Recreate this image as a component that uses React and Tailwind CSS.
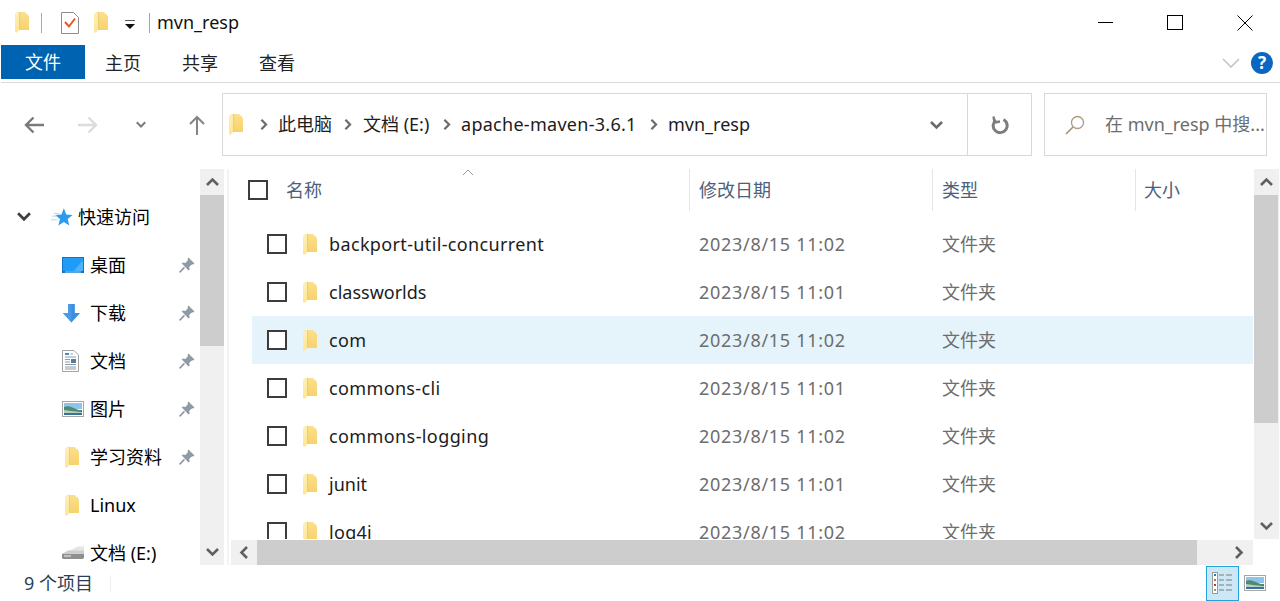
import React from "react";

const Folder = ({ className = "" }) => (
  <svg viewBox="0 0 14 21" className={`w-[14px] h-[21px] shrink-0 ${className}`}>
    <defs>
      <linearGradient id="fbody" x1="0" y1="0" x2="0" y2="1">
        <stop offset="0" stopColor="#fbe08f" />
        <stop offset="1" stopColor="#f8d26c" />
      </linearGradient>
      <linearGradient id="fleaf" x1="0" y1="0" x2="0" y2="1">
        <stop offset="0" stopColor="#ffefb5" />
        <stop offset="1" stopColor="#fde59a" />
      </linearGradient>
    </defs>
    <path d="M1 0H10L11.5 2H13V4H14V18H3V1Z" fill="url(#fbody)" />
    <path d="M0 1.5L4.5 0V18L1.2 21L0 20Z" fill="url(#fleaf)" />
    <path d="M4.6 0V18" stroke="#e8c468" strokeWidth="0.8" />
  </svg>
);

const Chevron = ({ dir = "down", className = "", color = "#606060" }) => {
  const d = {
    up: "M1 9L6.5 3.5L12 9",
    down: "M1 3L6.5 8.5L12 3",
    left: "M9 1L3.5 6.5L9 12",
    right: "M4 1L9.5 6.5L4 12",
  }[dir];
  return (
    <svg viewBox="0 0 13 13" className={`w-[13px] h-[13px] shrink-0 ${className}`} fill="none" stroke={color} strokeWidth="2.6">
      <path d={d} />
    </svg>
  );
};

const Check = ({ className = "" }) => (
  <div className={`w-5 h-5 border-2 border-[#3c3c3c] bg-white shrink-0 ${className}`} />
);

const Pin = () => (
  <svg viewBox="0 0 16 16" className="w-4 h-4 shrink-0">
    <path d="M9.5 0.5L15.5 6.5L14.3 7.6L13.2 7.2L10.3 9.7L10.6 12.4L9.5 13.4L2.8 6.6L3.8 5.6L6.5 5.9L9 3L8.5 1.7Z" fill="#8f9aa5" />
    <path d="M5.4 10.4L0.6 15.4" stroke="#8f9aa5" strokeWidth="1.6" />
  </svg>
);

const Star = () => (
  <svg viewBox="0 0 24 20" className="w-[22px] h-[19px] shrink-0">
    <path d="M14 0L16.6 6.8L23.6 7.2L18.2 11.6L20 18.6L14 14.8L8 18.6L9.8 11.6L4.4 7.2L11.4 6.8Z" fill="#2b9bee" />
    <path d="M1 8.5H7M0 12.5H7M3 5.5H9" stroke="#a5d7f8" strokeWidth="1" />
  </svg>
);

const Desktop = () => (
  <svg viewBox="0 0 22 16" className="w-[22px] h-4 shrink-0">
    <rect x="0" y="0" width="22" height="16" fill="#0f75c8" />
    <rect x="1" y="1" width="20" height="13" fill="#1e9cf8" />
    <path d="M12 14L21 3V14Z" fill="#4db4fb" />
    <path d="M3 15H19" stroke="#cfe9fb" strokeWidth="0.8" />
  </svg>
);

const Download = () => (
  <svg viewBox="0 0 20 20" className="w-[19px] h-[19px] shrink-0">
    <path d="M6.5 0H13.5V9.5H19L10 19.5L1 9.5H6.5Z" fill="#3b8fe0" />
    <path d="M1 9.5H6.5V0H10V19.5Z" fill="#4a9be6" />
  </svg>
);

const DocIcon = () => (
  <svg viewBox="0 0 17 22" className="w-[17px] h-[22px] shrink-0">
    <path d="M0.5 0.5H12L16.5 5V21.5H0.5Z" fill="#fff" stroke="#a3a3a3" />
    <path d="M3 4H7" stroke="#3a8ed8" strokeWidth="2" />
    <path d="M8.5 4H11M3 7H14M3 9.5H8M3 12H8M3 14.5H14M3 17H14M3 19H14" stroke="#8b9aa8" strokeWidth="1" />
    <rect x="9" y="9" width="5" height="4" fill="#4d7f9e" />
  </svg>
);

const Picture = ({ className = "w-[22px] h-4" }) => (
  <svg viewBox="0 0 22 16" className={`${className} shrink-0`}>
    <rect x="0.5" y="0.5" width="21" height="15" fill="#fff" stroke="#a5a5a5" />
    <rect x="2" y="2" width="18" height="6" fill="#8fc4ea" />
    <path d="M2 6C6 4 10 6 14 8C16 9 18 9 20 9V14H2Z" fill="#4f8a6f" />
    <rect x="2" y="10" width="18" height="4" fill="#38709a" />
    <path d="M2 9L9 10L20 11V12H2Z" fill="#b8cfc4" />
  </svg>
);

const Drive = () => (
  <svg viewBox="0 0 23 14" className="w-[23px] h-[14px] shrink-0">
    <path d="M0 8L16 0.5H22V7H0Z" fill="#e5e5e5" />
    <path d="M0 8L6 4.5H22V9L21 11H1Z" fill="#cfcfcf" />
    <path d="M0 8H22V11.5L21 13H1L0 12Z" fill="#8f8f8f" />
    <path d="M2 10H9" stroke="#f1f1f1" strokeWidth="1" />
  </svg>
);

const Tab = ({ children, className }) => (
  <span className={`text-[#222] leading-[34px] mt-px ${className}`}>{children}</span>
);

const NavItem = ({ icon, label, pin }) => (
  <div className="h-12 flex items-center shrink-0">
    <div className="w-[28px] ml-[62px] flex items-center">{icon}</div>
    <span className="text-black text-[18px] whitespace-nowrap">{label}</span>
    {pin && <span className="ml-auto mr-[5px]"><Pin /></span>}
  </div>
);

const Row = ({ name, date, active, track }) => (
  <div className={`h-12 flex items-center shrink-0 ml-[21px] ${active ? "bg-[#e5f3fb]" : ""}`}>
    <Check className="ml-[15px]" />
    <Folder className="ml-[16px]" />
    <span className={`ml-[12px] w-[370px] text-[18px] text-[#1c1c1c] whitespace-nowrap ${track}`}>{name}</span>
    <span className="w-[243px] text-[18px] text-[#6d6d6d] whitespace-nowrap tracking-[0.7px]">{date}</span>
    <span className="text-[18px] text-[#6d6d6d]">文件夹</span>
  </div>
);

const rows = [
  ["backport-util-concurrent", "2023/8/15 11:02", false, "tracking-[0.36px]"],
  ["classworlds", "2023/8/15 11:01", false, ""],
  ["com", "2023/8/15 11:02", true, "tracking-[0.3px]"],
  ["commons-cli", "2023/8/15 11:01", false, "tracking-[0.36px]"],
  ["commons-logging", "2023/8/15 11:02", false, "tracking-[0.4px]"],
  ["junit", "2023/8/15 11:01", false, ""],
  ["log4j", "2023/8/15 11:02", false, "tracking-[0.3px]"],
];

const Crumb = ({ children, className = "" }) => (
  <div className="flex items-center gap-[9px] shrink-0">
    <Chevron dir="right" color="#6a6a6a" className="!w-[11px] !h-[11px]" />
    <span className={`text-[18px] text-[#1c1c1c] whitespace-nowrap ${className}`}>{children}</span>
  </div>
);

export default function App() {
  return (
    <div className="w-[1280px] h-[601px] bg-white overflow-hidden flex flex-col font-['Noto_Sans','Noto_Sans_CJK_SC',sans-serif]">
      {/* title bar */}
      <div className="h-[45px] flex items-center shrink-0">
        <Folder className="ml-[15px]" />
        <div className="w-px h-5 bg-[#a8a8a8] ml-[12px]" />
        <svg viewBox="0 0 18 22" className="w-[18px] h-[22px] ml-[19px]">
          <path d="M0.5 0.5H12.5L17.5 5.5V21.5H0.5Z" fill="#fff" stroke="#8c8c8c" />
          <path d="M4 10L8 14.5L14 6.5" fill="none" stroke="#e8572a" strokeWidth="2" />
        </svg>
        <Folder className="ml-[15px]" />
        <svg viewBox="0 0 12 10" className="w-3 h-[10px] ml-[16px] mt-[4px]">
          <path d="M1 0H11" stroke="#111" strokeWidth="1.4" />
          <path d="M1 4H11L6 9Z" fill="#111" />
        </svg>
        <div className="w-px h-5 bg-[#a8a8a8] ml-[13px]" />
        <span className="ml-[7px] text-[18px] text-[#111]">mvn_resp</span>
        <div className="ml-auto flex items-center mr-[27px]">
          <div className="w-[15px] h-px bg-black" />
          <div className="w-[16px] h-[15px] border border-black ml-[54px]" />
          <svg viewBox="0 0 16 16" className="w-4 h-4 ml-[54px]" fill="none" stroke="#000" strokeWidth="1">
            <path d="M0.5 0.5L15.5 15.5M15.5 0.5L0.5 15.5" />
          </svg>
        </div>
      </div>

      {/* ribbon tabs */}
      <div className="h-[38px] shrink-0 flex items-start border-b border-[#dadada] ml-px text-[18px]">
        <span className="w-[84px] h-[34px] bg-[#0063b1] text-white text-center leading-[34px]">文件</span>
        <Tab className="ml-[20px]">主页</Tab>
        <Tab className="ml-[41px]">共享</Tab>
        <Tab className="ml-[41px]">查看</Tab>
        <div className="ml-auto flex items-center h-[34px] mt-px">
          <svg viewBox="0 0 18 10" className="w-[18px] h-[10px] mr-[11px]" fill="none" stroke="#c4c4c4" strokeWidth="1.6">
            <path d="M1 1L9 9L17 1" />
          </svg>
          <div className="w-[22px] h-[22px] mr-[7px] rounded-full bg-[#0a66c0] text-white text-[17px] font-bold flex items-center justify-center">?</div>
        </div>
      </div>

      {/* address row */}
      <div className="h-[63px] mt-[10px] shrink-0 flex items-center">
        <svg viewBox="0 0 20 18" className="w-5 h-[18px] ml-[24px]" fill="none" stroke="#7a7a7a" strokeWidth="2.4">
          <path d="M20 9H2M9.5 1.5L2 9L9.5 16.5" />
        </svg>
        <svg viewBox="0 0 20 18" className="w-5 h-[18px] ml-[34px]" fill="none" stroke="#dcdcdc" strokeWidth="2.4">
          <path d="M0 9H18M10.5 1.5L18 9L10.5 16.5" />
        </svg>
        <Chevron color="#7a7a7a" className="!w-[10px] !h-[10px] ml-[38px]" />
        <svg viewBox="0 0 16 20" className="w-4 h-5 ml-[43px]" fill="none" stroke="#858585" strokeWidth="2">
          <path d="M8 20V2M1 9L8 2L15 9" />
        </svg>
        <div className="ml-[17px] w-[810px] h-[63px] border border-[#d9d9d9] flex items-center">
          <Folder className="ml-[6px]" />
          <div className="ml-[15px]"><Crumb className="w-[64px]">此电脑</Crumb></div>
          <Crumb className="w-[78px] ml-px">文档 (E:)</Crumb>
          <Crumb className="w-[187px] tracking-[0.28px]">apache-maven-3.6.1</Crumb>
          <Crumb>mvn_resp</Crumb>
          <div className="ml-auto flex items-center h-full">
            <Chevron color="#6a6a6a" className="mr-[24px] mt-[2px]" />
            <div className="w-px h-full bg-[#d9d9d9]" />
            <div className="w-[63px] flex justify-center">
              <svg viewBox="0 0 18 20" className="w-[18px] h-5" fill="none" stroke="#7d7d7d" strokeWidth="3">
                <path d="M5 5A7 7 0 1 0 12.5 4.5" />
                <path d="M2.5 1.5L3.5 7.5L9 6.5" strokeWidth="2.4" />
              </svg>
            </div>
          </div>
        </div>
        <div className="ml-[12px] w-[223px] h-[63px] border border-[#d9d9d9] flex items-center">
          <svg viewBox="0 0 20 20" className="w-5 h-5 ml-[20px]" fill="none" stroke="#8f8f8f" strokeWidth="1.3">
            <circle cx="12.5" cy="7.5" r="6" stroke="#b09a80" />
            <path d="M8 12L1 19" stroke="#a08f7f" strokeWidth="1.6" />
          </svg>
          <span className="ml-[20px] text-[18px] text-[#6d6d6d] whitespace-nowrap">在 mvn_resp 中搜...</span>
        </div>
      </div>

      {/* main */}
      <div className="h-[396px] mt-[13px] shrink-0 flex">
        {/* sidebar */}
        <div className="w-[200px] shrink-0 overflow-hidden flex flex-col pt-[24px]">
          <div className="h-12 flex items-center shrink-0">
            <Chevron color="#404040" className="ml-[17px] !w-[14px] !h-[14px]" />
            <div className="ml-[20px]"><Star /></div>
            <span className="ml-[5px] text-[18px] text-black">快速访问</span>
          </div>
          <NavItem icon={<Desktop />} label="桌面" pin />
          <NavItem icon={<Download />} label="下载" pin />
          <NavItem icon={<DocIcon />} label="文档" pin />
          <NavItem icon={<Picture />} label="图片" pin />
          <NavItem icon={<Folder className="ml-[3px]" />} label="学习资料" pin />
          <NavItem icon={<Folder className="ml-[3px]" />} label="Linux" />
          <NavItem icon={<Drive />} label="文档 (E:)" />
        </div>
        <div className="w-[24px] shrink-0 h-full bg-[#f0f0f0] flex flex-col items-center">
          <div className="h-[26px] flex items-center"><Chevron dir="up" /></div>
          <div className="w-full h-[151px] bg-[#cdcdcd]" />
          <div className="mt-auto h-[26px] flex items-center"><Chevron dir="down" /></div>
        </div>
        <div className="w-[4px] shrink-0 ml-[3px] border-l-2 border-[#f3f3f3]" />

        {/* list */}
        <div className="w-[1022px] shrink-0 flex flex-col">
          <div className="flex-1 min-h-0 flex">
            <div className="w-[1022px] min-w-0 flex flex-col overflow-hidden">
              <div className="h-[51px] shrink-0 flex items-start text-[18px] text-[#4c607a] relative">
                <div className="h-[42px] w-full flex items-center">
                  <Check className="ml-[17px]" />
                  <span className="ml-[18px] w-[403px]">名称</span>
                  <div className="w-px h-[42px] bg-[#e5e5e5]" />
                  <span className="ml-[9px] w-[233px]">修改日期</span>
                  <div className="w-px h-[42px] bg-[#e5e5e5]" />
                  <span className="ml-[9px] w-[193px]">类型</span>
                  <div className="w-px h-[42px] bg-[#e5e5e5]" />
                  <span className="ml-[8px]">大小</span>
                </div>
                <svg viewBox="0 0 12 7" className="w-3 h-[7px] absolute left-[231px] top-0" fill="none" stroke="#9a9a9a" strokeWidth="1">
                  <path d="M1 6L6 1L11 6" />
                </svg>
              </div>
              {rows.map(([n, d, a, t]) => (
                <Row key={n} name={n} date={d} active={a} track={t} />
              ))}
            </div>
          </div>
          <div className="h-[25px] shrink-0 mt-px bg-[#f0f0f0] flex items-center">
            <div className="w-[26px] flex justify-center"><Chevron dir="left" /></div>
            <div className="w-[940px] h-full bg-[#cdcdcd]" />
            <div className="flex-1 flex justify-end pr-[8px]"><Chevron dir="right" /></div>
          </div>
        </div>
        <div className="w-[25px] ml-px shrink-0 h-[370px] bg-[#f0f0f0] flex flex-col items-center">
          <div className="h-[26px] flex items-center"><Chevron dir="up" /></div>
          <div className="w-[24px] self-start h-[228px] bg-[#cdcdcd]" />
          <div className="mt-auto h-[26px] flex items-center"><Chevron dir="down" /></div>
        </div>
      </div>

      {/* status bar */}
      <div className="flex-1 flex items-center min-h-0">
        <span className="ml-[24px] w-[86px] text-[18px] text-[#2a3f55]">9 个项目</span>
        <div className="w-px h-[17px] bg-[#f0f0f0]" />
        <div className="ml-auto flex items-center mr-[14px]">
          <div className="w-[33px] h-[35px] bg-[#cce8f6] border border-[#26a0da] flex flex-col justify-center pl-[5px] gap-[1px]">
            <svg viewBox="0 0 21 22" className="w-[21px] h-[22px]">
              <rect x="0.5" y="0.5" width="5" height="21" fill="#fff" stroke="#9a9a9a" />
              <rect x="2" y="2" width="2" height="2" fill="#3a79a8" />
              <rect x="2" y="7" width="2" height="2" fill="#b3743c" />
              <rect x="2" y="12" width="2" height="2" fill="#c0392b" />
              <rect x="2" y="17" width="2" height="2" fill="#7fa35a" />
              <path d="M7 3H12M14 3H20M7 8H12M14 8H20M7 13H12M14 13H20M7 18H12M14 18H20" stroke="#7a7a7a" strokeWidth="1" />
            </svg>
          </div>
          <div className="ml-[5px]"><Picture className="w-[22px] h-4" /></div>
        </div>
      </div>
    </div>
  );
}
